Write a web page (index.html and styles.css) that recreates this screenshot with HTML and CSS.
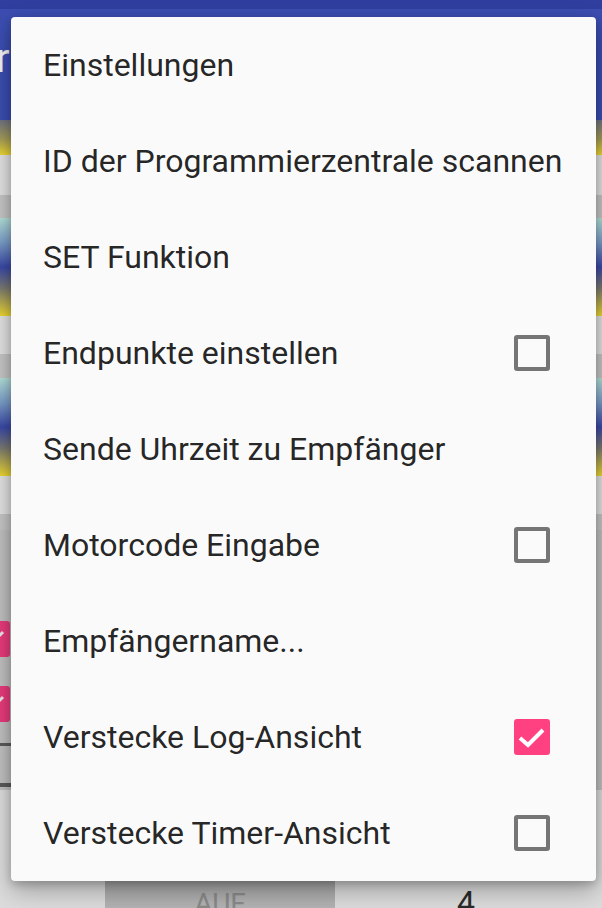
FILE: index.html
```html
<!DOCTYPE html>
<html lang="de">
<head>
<meta charset="utf-8">
<title>Menü</title>
<link rel="stylesheet" href="styles.css">
</head>
<body>
<div class="app">
  <div class="statusbar"></div>
  <div class="toolbar"><span class="title">r</span></div>
  <div class="band band-partial"></div>
  <div class="strip light h40"></div>
  <div class="strip mid h23"></div>
  <div class="band"></div>
  <div class="strip light h38"></div>
  <div class="strip mid h24"></div>
  <div class="band"></div>
  <div class="strip light h38"></div>
  <div class="strip mid h16"></div>
  <div class="block">
    <div class="mini-check"><svg viewBox="0 0 36 36" width="36" height="36"><path d="M6 19 L14 26 L29 11" fill="none" stroke="#e8e8e8" stroke-width="3"/></svg></div>
    <div class="mini-check second"><svg viewBox="0 0 36 36" width="36" height="36"><path d="M6 19 L14 26 L29 11" fill="none" stroke="#e8e8e8" stroke-width="3"/></svg></div>
    <div class="rule first"></div>
    <div class="rule second"></div>
  </div>
  <div class="footer">
    <div class="btn">AUF</div>
    <div class="count">4</div>
  </div>
</div>

<div class="menu">
  <div class="item"><span>Einstellungen</span></div>
  <div class="item"><span>ID der Programmierzentrale scannen</span></div>
  <div class="item"><span>SET Funktion</span></div>
  <div class="item"><span>Endpunkte einstellen</span><span class="cb"></span></div>
  <div class="item"><span>Sende Uhrzeit zu Empfänger</span></div>
  <div class="item"><span>Motorcode Eingabe</span><span class="cb"></span></div>
  <div class="item"><span>Empfängername...</span></div>
  <div class="item"><span>Verstecke Log-Ansicht</span><span class="cb checked"><svg viewBox="0 0 36 36" width="36" height="36"><path d="M6 19 L14 26 L29 11" fill="none" stroke="#ffffff" stroke-width="4"/></svg></span></div>
  <div class="item"><span>Verstecke Timer-Ansicht</span><span class="cb"></span></div>
</div>
</body>
</html>
```

FILE: styles.css
```css
html, body {
  margin: 0;
  padding: 0;
  width: 602px;
  height: 908px;
  overflow: hidden;
  font-family: Roboto, "Noto Sans", sans-serif;
}

.app {
  display: flex;
  flex-direction: column;
  width: 602px;
  height: 908px;
  overflow: hidden;
  background: #e0e0e0;
}

.app > div {
  flex-shrink: 0;
}

.statusbar {
  height: 9px;
  background: #303f9f;
}

.toolbar {
  height: 111px;
  background: #3b4db0;
  display: flex;
  align-items: center;
  overflow: hidden;
}

.title {
  color: #f2f2f2;
  font-size: 40px;
  margin-left: -4px;
  margin-top: -12px;
}

.band {
  height: 98px;
  background: linear-gradient(to bottom, #b2e0d8 0%, #7a9cc8 25%, #3a48a6 50%, #7a7a70 72%, #ecd630 100%);
}

.band-partial {
  height: 35px;
  background: linear-gradient(to bottom, #6e7181 0%, #a59c57 55%, #ecd630 100%);
}

.strip.light { background: #e1e1e1; }
.strip.mid { background: #c4c4c4; }
.h40 { height: 40px; }
.h38 { height: 38px; }
.h24 { height: 24px; }
.h23 { height: 23px; }
.h16 { height: 16px; }

.block {
  height: 260px;
  background: #bfbfbf;
  display: flex;
  flex-direction: column;
}

.mini-check {
  width: 36px;
  height: 36px;
  flex-shrink: 0;
  margin-left: -26px;
  background: #e63b7c;
  border-radius: 3px;
  margin-top: 91px;
}

.mini-check.second {
  margin-top: 29px;
}

.rule {
  height: 3px;
  width: 40px;
  flex-shrink: 0;
  background: #5a5a5a;
}

.rule.first { margin-top: 21px; }
.rule.second { margin-top: 37px; height: 4px; }

.footer {
  flex: 1 0 auto;
  background: #dcdcdc;
  display: flex;
  align-items: flex-start;
  padding-top: 91px;
}

.btn {
  width: 230px;
  height: 50px;
  margin-left: 105px;
  background: linear-gradient(to bottom, #a8a8a8, #bdbdbd);
  color: #8a8a8a;
  font-size: 28px;
  text-align: center;
  padding-top: 6px;
  box-sizing: border-box;
}

.count {
  margin-left: 122px;
  padding-top: 2px;
  font-size: 32px;
  color: #2a2a2a;
}

.menu {
  position: absolute;
  top: 17px;
  left: 11px;
  width: 585px;
  background: #fafafa;
  border-radius: 4px;
  box-shadow: 0 10px 24px rgba(0, 0, 0, 0.28), 0 3px 8px rgba(0, 0, 0, 0.2);
  display: flex;
  flex-direction: column;
}

.item {
  height: 96px;
  display: flex;
  align-items: center;
  justify-content: space-between;
  padding: 0 46px 0 32px;
  font-size: 32px;
  white-space: nowrap;
  color: rgba(0, 0, 0, 0.87);
}

.cb {
  width: 36px;
  height: 36px;
  flex-shrink: 0;
  box-sizing: border-box;
  border: 4px solid #757575;
  border-radius: 3px;
  display: block;
}

.cb.checked {
  border: none;
  background: #ff4081;
}

.cb svg {
  display: block;
}
```
